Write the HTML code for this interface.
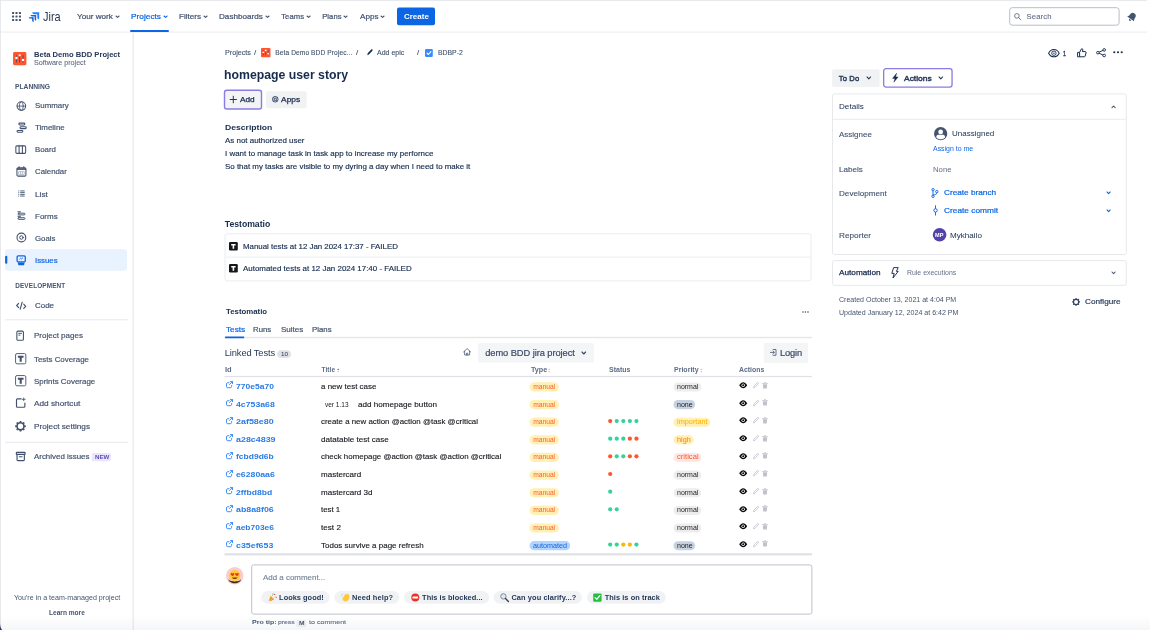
<!DOCTYPE html>
<html lang="en"><head><meta charset="utf-8"><title>homepage user story - Jira</title>
<style>
html,body{margin:0;padding:0;}
body{width:1150px;height:630px;position:relative;overflow:hidden;background:#fff;font-family:"Liberation Sans", sans-serif;color:#172B4D;}
#app{position:absolute;left:0;top:0;width:1150px;height:630px;will-change:transform;}
#app>div,#app>span,#app>svg{position:absolute;display:block;}
#app>span{white-space:pre;line-height:12px;transform-origin:0 50%;}
svg{overflow:visible;}
</style></head><body><div id="app">
<svg style="left:0px;top:0px;" width="1147" height="2"><rect x="0.00" y="0.00" width="1147.00" height="1.10" rx="0" fill="#E9EAED"/></svg>
<svg style="left:0px;top:31px;" width="1147" height="2"><rect x="0.00" y="0.50" width="1147.00" height="1.20" rx="0" fill="#EEEFF2"/></svg>
<svg style="left:132px;top:32px;" width="3" height="598"><rect x="0.30" y="0.50" width="1.80" height="597.50" rx="0" fill="#EEEFF2"/></svg>
<svg style="left:0px;top:0px;" width="1" height="630"><rect x="0.00" y="0.00" width="0.80" height="630.00" rx="0" fill="#E3E4E8"/></svg>
<svg style="left:12px;top:12px;" width="9" height="9" viewBox="0 0 9 9"><rect x="0" y="0" width="2.1" height="2.1" rx="0.5" fill="#44546F"/><rect x="0" y="3.45" width="2.1" height="2.1" rx="0.5" fill="#44546F"/><rect x="0" y="6.9" width="2.1" height="2.1" rx="0.5" fill="#44546F"/><rect x="3.45" y="0" width="2.1" height="2.1" rx="0.5" fill="#44546F"/><rect x="3.45" y="3.45" width="2.1" height="2.1" rx="0.5" fill="#44546F"/><rect x="3.45" y="6.9" width="2.1" height="2.1" rx="0.5" fill="#44546F"/><rect x="6.9" y="0" width="2.1" height="2.1" rx="0.5" fill="#44546F"/><rect x="6.9" y="3.45" width="2.1" height="2.1" rx="0.5" fill="#44546F"/><rect x="6.9" y="6.9" width="2.1" height="2.1" rx="0.5" fill="#44546F"/></svg>
<svg style="left:29px;top:12px;" width="10.5" height="10" viewBox="0 0 10.5 10"><path d="M3.2 0.3 H10.2 V7.3 C10.2 7.3 8.3 7.2 8.3 5.4 V2.2 H5.1 C3.3 2.2 3.2 0.3 3.2 0.3Z" fill="#2684FF"/>
<path d="M1.6 2.9 H7.2 V8.6 C7.2 8.6 5.6 8.5 5.6 6.9 V4.5 H3.2 C1.7 4.5 1.6 2.9 1.6 2.9Z" fill="#1868DB"/>
<path d="M0 5.2 H4.6 V9.9 C4.6 9.9 3.2 9.8 3.2 8.4 V6.6 H1.4 C0.1 6.6 0 5.2 0 5.2Z" fill="#0052CC"/></svg>
<span style="left:43.30px;top:11px;font-size:12.4px;transform:scaleX(0.885);color:#253858;">Jira</span>
<span style="left:77.40px;top:11px;font-size:7.6px;transform:scaleX(1.0695);color:#44546F;-webkit-text-stroke:0.22px #44546F;">Your work</span>
<svg style="left:115.45px;top:15.275px;" width="5.1" height="3.45" viewBox="0 0 5.1 3.45"><path d="M1 1 L2.55 2.45 L4.1 1" fill="none" stroke="#44546F" stroke-width="1.05" stroke-linecap="round" stroke-linejoin="round"/></svg>
<span style="left:131.20px;top:11px;font-size:7.6px;transform:scaleX(1.0944);color:#0C66E4;-webkit-text-stroke:0.22px #0C66E4;">Projects</span>
<svg style="left:163.45px;top:15.275px;" width="5.1" height="3.45" viewBox="0 0 5.1 3.45"><path d="M1 1 L2.55 2.45 L4.1 1" fill="none" stroke="#0C66E4" stroke-width="1.05" stroke-linecap="round" stroke-linejoin="round"/></svg>
<svg style="left:130px;top:29px;" width="39" height="3"><rect x="0.00" y="0.90" width="39.00" height="2.10" rx="1" fill="#0C66E4"/></svg>
<span style="left:178.80px;top:11px;font-size:7.6px;transform:scaleX(1.0656);color:#44546F;-webkit-text-stroke:0.22px #44546F;">Filters</span>
<svg style="left:203.45px;top:15.275px;" width="5.1" height="3.45" viewBox="0 0 5.1 3.45"><path d="M1 1 L2.55 2.45 L4.1 1" fill="none" stroke="#44546F" stroke-width="1.05" stroke-linecap="round" stroke-linejoin="round"/></svg>
<span style="left:219.40px;top:11px;font-size:7.6px;transform:scaleX(1.0702);color:#44546F;-webkit-text-stroke:0.22px #44546F;">Dashboards</span>
<svg style="left:265.05px;top:15.275px;" width="5.1" height="3.45" viewBox="0 0 5.1 3.45"><path d="M1 1 L2.55 2.45 L4.1 1" fill="none" stroke="#44546F" stroke-width="1.05" stroke-linecap="round" stroke-linejoin="round"/></svg>
<span style="left:281.20px;top:11px;font-size:7.6px;color:#44546F;letter-spacing:0.131px;-webkit-text-stroke:0.22px #44546F;">Teams</span>
<svg style="left:306.45px;top:15.275px;" width="5.1" height="3.45" viewBox="0 0 5.1 3.45"><path d="M1 1 L2.55 2.45 L4.1 1" fill="none" stroke="#44546F" stroke-width="1.05" stroke-linecap="round" stroke-linejoin="round"/></svg>
<span style="left:322.20px;top:11px;font-size:7.6px;color:#44546F;letter-spacing:0.086px;-webkit-text-stroke:0.22px #44546F;">Plans</span>
<svg style="left:343.45px;top:15.275px;" width="5.1" height="3.45" viewBox="0 0 5.1 3.45"><path d="M1 1 L2.55 2.45 L4.1 1" fill="none" stroke="#44546F" stroke-width="1.05" stroke-linecap="round" stroke-linejoin="round"/></svg>
<span style="left:359.80px;top:11px;font-size:7.6px;transform:scaleX(1.0644);color:#44546F;-webkit-text-stroke:0.22px #44546F;">Apps</span>
<svg style="left:380.45px;top:15.275px;" width="5.1" height="3.45" viewBox="0 0 5.1 3.45"><path d="M1 1 L2.55 2.45 L4.1 1" fill="none" stroke="#44546F" stroke-width="1.05" stroke-linecap="round" stroke-linejoin="round"/></svg>
<svg style="left:397px;top:7px;" width="38" height="19"><rect x="0.00" y="0.60" width="38.00" height="17.60" rx="2" fill="#0C66E4"/></svg>
<span style="left:403.90px;top:11px;font-size:7.6px;transform:scaleX(1.0502);font-weight:700;color:#fff;">Create</span>
<svg style="left:1009px;top:7px;" width="111" height="19"><rect x="0.70" y="0.70" width="109.40" height="17.50" rx="2.5" fill="#fff" stroke="#B7BDC8" stroke-width="1"/></svg>
<svg style="left:1014px;top:12.6px;" width="7" height="7" viewBox="0 0 7 7"><circle cx="2.9" cy="2.9" r="2.3" fill="none" stroke="#626F86" stroke-width="0.9"/><path d="M4.7 4.7 L6.6 6.6" stroke="#626F86" stroke-width="0.9" stroke-linecap="round"/></svg>
<span style="left:1026.50px;top:11px;font-size:7.7px;color:#626F86;letter-spacing:0.112px;-webkit-text-stroke:0.1px #626F86;">Search</span>
<svg style="left:1127px;top:11.5px;" width="10" height="10" viewBox="0 0 10 10"><g transform="rotate(35 5 5)"><path d="M5 0.6 C7.3 0.6 8 2.4 8 4.2 C8 6 8.9 6.8 9.2 7.4 H0.8 C1.1 6.8 2 6 2 4.2 C2 2.4 2.7 0.6 5 0.6Z" fill="#44546F"/><path d="M3.8 8.1 H6.2 C6.2 9 5.6 9.5 5 9.5 C4.4 9.5 3.8 9 3.8 8.1Z" fill="#44546F"/></g></svg>
<svg style="left:13px;top:51.7px;" width="13.5" height="13.3" viewBox="0 0 13.5 13.3"><rect x="0.05" y="0" width="13.35" height="13.2" rx="1.4" fill="#FF5630"/><g fill="#344563"><rect x="2.95" y="3.2" width="0.8" height="7.2"/><rect x="6.3" y="3.2" width="0.8" height="7.2"/><rect x="9.65" y="3.2" width="0.8" height="7.2"/></g><g fill="#fff"><circle cx="3.35" cy="6" r="1.2"/><circle cx="6.7" cy="3.3" r="1.15"/><circle cx="10.05" cy="8" r="1.2"/></g></svg>
<span style="left:33.80px;top:49px;font-size:7.3px;transform:scaleX(1.0411);font-weight:700;color:#253858;">Beta Demo BDD Project</span>
<span style="left:33.80px;top:57px;font-size:6.3px;transform:scaleX(1.136);color:#626F86;-webkit-text-stroke:0.1px #626F86;">Software project</span>
<span style="left:15.20px;top:81px;font-size:6.4px;transform:scaleX(1.0484);font-weight:700;color:#44546F;">PLANNING</span>
<svg style="left:16px;top:100.5px;" width="10.6" height="10.2" viewBox="0 0 10.6 10.2"><g fill="none" stroke="#42526E" stroke-linecap="round" stroke-linejoin="round"><circle cx="5.35" cy="5.1" r="4.3" stroke-width="1.05"/><ellipse cx="5.35" cy="5.1" rx="1.9" ry="4.3" stroke-width="0.8"/><path d="M1.1 5.1 H9.6" stroke-width="0.8"/></g></svg>
<span style="left:35.00px;top:100px;font-size:7.5px;transform:scaleX(1.0508);color:#42526E;-webkit-text-stroke:0.18px #42526E;">Summary</span>
<svg style="left:15.6px;top:122px;" width="11.2" height="11.4" viewBox="0 0 11.2 11.4"><g fill="none" stroke="#42526E" stroke-linecap="round" stroke-linejoin="round" stroke-width="1.1"><rect x="2.85" y="1.15" width="6" height="1.8" rx="0.9"/><rect x="4.05" y="4.8" width="6.2" height="1.8" rx="0.9"/><rect x="1.05" y="8.45" width="5.8" height="1.8" rx="0.9"/></g></svg>
<span style="left:35.00px;top:122px;font-size:7.5px;transform:scaleX(1.0587);color:#42526E;-webkit-text-stroke:0.18px #42526E;">Timeline</span>
<svg style="left:15.4px;top:144.8px;" width="11.6" height="9.4" viewBox="0 0 11.6 9.4"><g fill="none" stroke="#42526E" stroke-linecap="round" stroke-linejoin="round" stroke-width="1.05"><rect x="0.85" y="0.9" width="9.8" height="7.5" rx="1.1"/><path d="M4.1 0.9 V8.4 M7.4 0.9 V8.4"/></g></svg>
<span style="left:35.00px;top:144px;font-size:7.5px;transform:scaleX(1.0454);color:#42526E;-webkit-text-stroke:0.18px #42526E;">Board</span>
<svg style="left:15.6px;top:166.4px;" width="11" height="11" viewBox="0 0 11 11"><g fill="none" stroke="#42526E" stroke-linecap="round" stroke-linejoin="round"><rect x="0.95" y="1.7" width="9" height="8.4" rx="1.2" stroke-width="1.05"/><path d="M3.1 0.6 V2 M7.8 0.6 V2" stroke-width="1"/></g><rect x="0.9" y="2.2" width="9.1" height="1.7" fill="#42526E"/><g stroke="#42526E" stroke-width="0.45" opacity="0.75"><path d="M2.6 5.6 H8.3 M2.6 8.4 H8.3 M2.6 5.6 V8.4 M4.5 5.6 V8.4 M6.4 5.6 V8.4 M8.3 5.6 V8.4"/></g></svg>
<span style="left:34.90px;top:166px;font-size:7.5px;transform:scaleX(1.0456);color:#42526E;-webkit-text-stroke:0.18px #42526E;">Calendar</span>
<svg style="left:17.6px;top:190.4px;" width="7.2" height="6.8" viewBox="0 0 7.2 6.8"><g fill="#42526E"><rect x="0.3" y="0.5" width="0.9" height="0.9"/><rect x="0.3" y="2.2" width="0.9" height="0.9"/><rect x="0.3" y="3.9" width="0.9" height="0.9"/><rect x="0.3" y="5.6" width="0.9" height="0.9"/><rect x="2.2" y="0.5" width="4.5" height="0.9"/><rect x="2.2" y="2.2" width="4.5" height="0.9"/><rect x="2.2" y="3.9" width="4.5" height="0.9"/><rect x="2.2" y="5.6" width="4.5" height="0.9"/></g></svg>
<span style="left:34.90px;top:189px;font-size:7.5px;transform:scaleX(1.1074);color:#42526E;-webkit-text-stroke:0.18px #42526E;">List</span>
<svg style="left:16.8px;top:210.8px;" width="9.2" height="9.4" viewBox="0 0 9.2 9.4"><g fill="none" stroke="#42526E" stroke-linecap="round" stroke-linejoin="round" stroke-width="0.95"><rect x="1" y="2.2" width="7" height="1.7" rx="0.85"/><rect x="1" y="6.7" width="7" height="1.7" rx="0.85"/></g><g fill="#42526E"><rect x="0.5" y="0.3" width="3.4" height="1"/><rect x="0.5" y="4.8" width="3.4" height="1"/></g></svg>
<span style="left:34.90px;top:211px;font-size:7.5px;transform:scaleX(1.0647);color:#42526E;-webkit-text-stroke:0.18px #42526E;">Forms</span>
<svg style="left:15.6px;top:232.4px;" width="11" height="11" viewBox="0 0 11 11"><g fill="none" stroke="#42526E" stroke-linecap="round" stroke-linejoin="round"><circle cx="5.4" cy="5.5" r="4.4" stroke-width="1.1"/><circle cx="5.4" cy="5.5" r="1.75" stroke-width="1"/></g></svg>
<span style="left:34.90px;top:233px;font-size:7.5px;transform:scaleX(1.0373);color:#42526E;-webkit-text-stroke:0.18px #42526E;">Goals</span>
<svg style="left:5px;top:249px;" width="122" height="22"><rect x="0.10" y="0.20" width="121.90" height="21.60" rx="2" fill="#E9F2FF"/></svg>
<svg style="left:5px;top:255px;" width="3" height="9"><rect x="0.10" y="0.80" width="2.20" height="8.00" rx="1" fill="#0C66E4"/></svg>
<svg style="left:15.8px;top:254.9px;" width="10.4" height="10.5" viewBox="0 0 10.4 10.5"><rect x="1.1" y="0.9" width="8.2" height="6" rx="1.1" fill="none" stroke="#0C66E4" stroke-width="1.3"/><path d="M3.4 4.3 L4.6 3.3 L5.4 4 L7 2.6" fill="none" stroke="#0C66E4" stroke-width="0.9"/><path d="M1.7 7.6 H8.7 L8.1 9.9 C8 10.2 7.8 10.3 7.5 10.3 H2.9 C2.6 10.3 2.4 10.2 2.3 9.9Z" fill="#0C66E4"/></svg>
<span style="left:34.90px;top:255px;font-size:7.5px;transform:scaleX(1.0432);color:#0C66E4;-webkit-text-stroke:0.18px #0C66E4;">Issues</span>
<span style="left:15.20px;top:280px;font-size:6.4px;font-weight:700;color:#44546F;letter-spacing:0.14px;">DEVELOPMENT</span>
<svg style="left:15.8px;top:300.5px;" width="10.4" height="9" viewBox="0 0 26 23"><g fill="none" stroke="#42526E" stroke-width="2.9" stroke-linecap="round" stroke-linejoin="round"><path d="M6.5 6 L1.5 11.5 L6.5 17"/><path d="M19.5 8 L24.5 13.5 L19.5 19"/><path d="M15.5 3 L10.5 21"/></g></svg>
<span style="left:34.90px;top:300px;font-size:7.5px;transform:scaleX(1.0606);color:#42526E;-webkit-text-stroke:0.18px #42526E;">Code</span>
<svg style="left:5px;top:319px;" width="124" height="2"><rect x="0.00" y="0.20" width="123.30" height="1.10" rx="0" fill="#EBECF0"/></svg>
<svg style="left:16.3px;top:330px;" width="8.3" height="11.4" viewBox="0 0 19 25"><g fill="none" stroke="#42526E" stroke-width="2.5" stroke-linecap="round" stroke-linejoin="round"><rect x="2" y="2" width="15" height="21" rx="2.5"/></g><g fill="#42526E"><rect x="5.5" y="6" width="8" height="2.2"/><rect x="5.5" y="10" width="4.5" height="2.2"/></g></svg>
<span style="left:34.30px;top:330px;font-size:7.5px;transform:scaleX(1.0665);color:#42526E;-webkit-text-stroke:0.18px #42526E;">Project pages</span>
<svg style="left:14.9px;top:353.4px;" width="11.4" height="11.4" viewBox="0 0 24 24"><rect x="1.2" y="1.2" width="21.6" height="21.6" rx="3" fill="none" stroke="#42526E" stroke-width="1.9"/><path d="M6 6 H18 V10 H14.2 V18.5 H9.8 V10 H6Z" fill="#42526E"/></svg>
<span style="left:34.30px;top:354px;font-size:7.5px;transform:scaleX(1.054);color:#42526E;-webkit-text-stroke:0.18px #42526E;">Tests Coverage</span>
<svg style="left:14.9px;top:375.2px;" width="11.4" height="11.4" viewBox="0 0 24 24"><rect x="1.2" y="1.2" width="21.6" height="21.6" rx="3" fill="none" stroke="#42526E" stroke-width="1.9"/><path d="M6 6 H18 V10 H14.2 V18.5 H9.8 V10 H6Z" fill="#42526E"/></svg>
<span style="left:34.30px;top:376px;font-size:7.5px;transform:scaleX(1.0565);color:#42526E;-webkit-text-stroke:0.18px #42526E;">Sprints Coverage</span>
<svg style="left:14.9px;top:397.4px;" width="11.4" height="11.2" viewBox="0 0 24 24"><g fill="none" stroke="#42526E" stroke-width="2.5" stroke-linecap="round" stroke-linejoin="round"><path d="M13 4 H5 C3.9 4 3 4.9 3 6 V20 C3 21.1 3.9 22 5 22 H19 C20.1 22 21 21.1 21 20 V13"/><path d="M18.5 2 V8 M15.5 5 H21.5" stroke-width="1.8"/></g></svg>
<span style="left:34.30px;top:398px;font-size:7.5px;transform:scaleX(1.1001);color:#42526E;-webkit-text-stroke:0.18px #42526E;">Add shortcut</span>
<svg style="left:14.9px;top:420.8px;" width="11" height="11" viewBox="1.5 0.5 21 21"><g transform="translate(12 10.5)"><circle r="6.6" fill="none" stroke="#42526E" stroke-width="3"/><rect x="-1.7" y="-10.2" width="3.4" height="3.4" rx="0.8" fill="#42526E" transform="rotate(0)"/><rect x="-1.7" y="-10.2" width="3.4" height="3.4" rx="0.8" fill="#42526E" transform="rotate(45)"/><rect x="-1.7" y="-10.2" width="3.4" height="3.4" rx="0.8" fill="#42526E" transform="rotate(90)"/><rect x="-1.7" y="-10.2" width="3.4" height="3.4" rx="0.8" fill="#42526E" transform="rotate(135)"/><rect x="-1.7" y="-10.2" width="3.4" height="3.4" rx="0.8" fill="#42526E" transform="rotate(180)"/><rect x="-1.7" y="-10.2" width="3.4" height="3.4" rx="0.8" fill="#42526E" transform="rotate(225)"/><rect x="-1.7" y="-10.2" width="3.4" height="3.4" rx="0.8" fill="#42526E" transform="rotate(270)"/><rect x="-1.7" y="-10.2" width="3.4" height="3.4" rx="0.8" fill="#42526E" transform="rotate(315)"/></g></svg>
<span style="left:34.30px;top:421px;font-size:7.5px;transform:scaleX(1.0925);color:#42526E;-webkit-text-stroke:0.18px #42526E;">Project settings</span>
<svg style="left:5px;top:441px;" width="124" height="2"><rect x="0.00" y="0.80" width="123.30" height="1.10" rx="0" fill="#EBECF0"/></svg>
<svg style="left:14.9px;top:451px;" width="11.4" height="11" viewBox="0 0 24 24"><g fill="none" stroke="#42526E" stroke-width="2.5" stroke-linecap="round" stroke-linejoin="round"><rect x="2.5" y="3" width="19" height="4.5" rx="1"/><path d="M4 7.5 V19 C4 20.1 4.9 21 6 21 H18 C19.1 21 20 20.1 20 19 V7.5"/><path d="M9 12.5 H15"/></g></svg>
<span style="left:34.30px;top:451px;font-size:7.5px;transform:scaleX(1.0551);color:#42526E;-webkit-text-stroke:0.18px #42526E;">Archived issues</span>
<svg style="left:91px;top:453px;" width="20" height="9"><rect x="0.70" y="0.00" width="19.10" height="8.30" rx="1.5" fill="#EAE6FF"/></svg>
<span style="left:94.60px;top:451px;font-size:5.6px;transform:scaleX(1.0923);font-weight:700;color:#5E4DB2;">NEW</span>
<span style="left:13.90px;top:592px;font-size:6.3px;transform:scaleX(1.1285);color:#44546F;">You&#x27;re in a team-managed project</span>
<span style="left:48.90px;top:607px;font-size:6.9px;transform:scaleX(0.9541);font-weight:700;color:#44546F;">Learn more</span>
<span style="left:224.80px;top:47px;font-size:6.6px;transform:scaleX(1.0869);color:#44546F;-webkit-text-stroke:0.12px #44546F;">Projects</span>
<span style="left:254.20px;top:47px;font-size:6.6px;transform:scaleX(1.1921);color:#44546F;-webkit-text-stroke:0.12px #44546F;">/</span>
<svg style="left:260.9px;top:47.9px;" width="9.6" height="9.3" viewBox="0 0 9.6 9.3"><rect width="9.5" height="9.3" rx="1" fill="#FF5630"/><g fill="#344563"><rect x="2.1" y="2.3" width="0.6" height="5"/><rect x="4.45" y="2.3" width="0.6" height="5"/><rect x="6.8" y="2.3" width="0.6" height="5"/></g><g fill="#fff"><circle cx="2.4" cy="4.3" r="0.85"/><circle cx="4.75" cy="2.4" r="0.85"/><circle cx="7.1" cy="5.7" r="0.85"/></g></svg>
<span style="left:275.20px;top:47px;font-size:6.6px;color:#44546F;letter-spacing:0.11px;-webkit-text-stroke:0.12px #44546F;">Beta Demo BDD Projec...</span>
<span style="left:355.90px;top:47px;font-size:6.6px;transform:scaleX(1.1921);color:#44546F;-webkit-text-stroke:0.12px #44546F;">/</span>
<svg style="left:367px;top:49.2px;" width="5.8" height="6.4" viewBox="0 0 5.8 6.4"><path d="M0.3 6.2 L0.7 4.3 L4.2 0.6 C4.6 0.2 5.1 0.2 5.4 0.6 C5.8 1 5.8 1.4 5.4 1.8 L1.9 5.6 Z" fill="#172B4D"/></svg>
<span style="left:377.20px;top:47px;font-size:6.6px;transform:scaleX(1.0633);color:#44546F;-webkit-text-stroke:0.12px #44546F;">Add epic</span>
<span style="left:417.20px;top:47px;font-size:6.6px;transform:scaleX(1.1921);color:#44546F;-webkit-text-stroke:0.12px #44546F;">/</span>
<svg style="left:424.8px;top:48.6px;" width="7.8" height="8" viewBox="0 0 7.8 8"><rect width="7.8" height="8" rx="1.2" fill="#388BFF"/><path d="M2 4.1 L3.4 5.5 L5.9 2.6" fill="none" stroke="#fff" stroke-width="1.1" stroke-linecap="round" stroke-linejoin="round"/></svg>
<span style="left:438.00px;top:47px;font-size:6.6px;transform:scaleX(1.0407);color:#44546F;-webkit-text-stroke:0.12px #44546F;">BDBP-2</span>
<span style="left:224.20px;top:69px;font-size:13.2px;transform:scaleX(0.9303);font-weight:700;">homepage user story</span>
<svg style="left:223px;top:89px;" width="40" height="21"><rect x="1.50" y="1.20" width="37.00" height="18.80" rx="2.3" fill="#F3F4F6" stroke="#8B7BE3" stroke-width="1.4"/></svg>
<svg style="left:230.3px;top:95.9px;" width="6.6" height="7" viewBox="0 0 6.6 7"><path d="M3.3 0.2 V6.8 M0.1 3.5 H6.5" stroke="#172B4D" stroke-width="0.95" stroke-linecap="round"/></svg>
<span style="left:239.90px;top:94px;font-size:7.6px;transform:scaleX(1.0897);-webkit-text-stroke:0.25px #172B4D;">Add</span>
<svg style="left:266px;top:91px;" width="41" height="18"><rect x="0.00" y="0.30" width="40.60" height="17.00" rx="2" fill="#F1F2F4"/></svg>
<svg style="left:271.5px;top:96px;" width="6.5" height="6.5" viewBox="0 0 6.5 6.5"><g fill="none" stroke="#172B4D" stroke-width="0.8"><circle cx="3.25" cy="3.25" r="2.8"/><circle cx="3.25" cy="3.25" r="1.2"/><path d="M1.3 1.3 L2.4 2.4 M5.2 1.3 L4.1 2.4 M1.3 5.2 L2.4 4.1 M5.2 5.2 L4.1 4.1" stroke-width="0.6"/></g></svg>
<span style="left:280.70px;top:94px;font-size:7.6px;transform:scaleX(1.1106);-webkit-text-stroke:0.25px #172B4D;">Apps</span>
<span style="left:224.80px;top:122px;font-size:8.1px;transform:scaleX(1.0631);font-weight:700;">Description</span>
<span style="left:224.80px;top:135px;font-size:7.3px;transform:scaleX(1.0891);-webkit-text-stroke:0.15px #172B4D;">As not authorized user</span>
<span style="left:224.80px;top:148px;font-size:7.3px;transform:scaleX(1.0909);-webkit-text-stroke:0.15px #172B4D;">I want to manage task in task app to increase my perfornce</span>
<span style="left:224.80px;top:161px;font-size:7.3px;transform:scaleX(1.0859);-webkit-text-stroke:0.15px #172B4D;">So that my tasks are visible to my dyring a day when I need to make it</span>
<span style="left:224.80px;top:218px;font-size:8.7px;font-weight:700;letter-spacing:-0.034px;">Testomatio</span>
<svg style="left:224px;top:233px;" width="588" height="49"><rect x="1.00" y="0.80" width="586.00" height="47.10" rx="2" fill="#fff" stroke="#EBECEF" stroke-width="1"/></svg>
<svg style="left:225px;top:256px;" width="586" height="2"><rect x="0.50" y="0.60" width="585.00" height="1.00" rx="0" fill="#ECEDF0"/></svg>
<svg style="left:229.2px;top:241.7px;" width="8.8" height="8.6" viewBox="0 0 8.8 8.6"><rect width="8.8" height="8.6" rx="1.3" fill="#15171A"/><path d="M2.2 2 H6.6 V3.5 H5.2 V6.8 H3.6 V3.5 H2.2Z" fill="#fff"/></svg>
<span style="left:242.90px;top:241px;font-size:7.3px;transform:scaleX(1.0782);-webkit-text-stroke:0.15px #172B4D;">Manual tests at 12 Jan 2024 17:37 - FAILED</span>
<svg style="left:229.2px;top:264.2px;" width="8.8" height="8.6" viewBox="0 0 8.8 8.6"><rect width="8.8" height="8.6" rx="1.3" fill="#15171A"/><path d="M2.2 2 H6.6 V3.5 H5.2 V6.8 H3.6 V3.5 H2.2Z" fill="#fff"/></svg>
<span style="left:242.90px;top:263px;font-size:7.3px;transform:scaleX(1.0882);-webkit-text-stroke:0.15px #172B4D;">Automated tests at 12 Jan 2024 17:40 - FAILED</span>
<span style="left:225.50px;top:306px;font-size:7.5px;transform:scaleX(1.0424);font-weight:700;">Testomatio</span>
<svg style="left:802px;top:310.8px;" width="7" height="2" viewBox="0 0 7 2"><g fill="#44546F"><circle cx="1" cy="1" r="0.8"/><circle cx="3.5" cy="1" r="0.8"/><circle cx="6" cy="1" r="0.8"/></g></svg>
<span style="left:225.50px;top:324px;font-size:7.3px;transform:scaleX(1.1285);color:#0C66E4;-webkit-text-stroke:0.2px #0C66E4;">Tests</span>
<span style="left:253.30px;top:324px;font-size:7.3px;transform:scaleX(1.0688);color:#44546F;-webkit-text-stroke:0.2px #44546F;">Runs</span>
<span style="left:280.90px;top:324px;font-size:7.3px;transform:scaleX(1.1005);color:#44546F;-webkit-text-stroke:0.2px #44546F;">Suites</span>
<span style="left:312.10px;top:324px;font-size:7.3px;transform:scaleX(1.0741);color:#44546F;-webkit-text-stroke:0.2px #44546F;">Plans</span>
<svg style="left:224px;top:336px;" width="588" height="3"><rect x="0.50" y="0.80" width="587.50" height="1.40" rx="0" fill="#E4E6EA"/></svg>
<svg style="left:225px;top:336px;" width="20" height="3"><rect x="0.00" y="0.40" width="19.20" height="1.90" rx="0.5" fill="#0C66E4"/></svg>
<span style="left:224.80px;top:347px;font-size:9.3px;color:#253858;letter-spacing:-0.111px;">Linked Tests</span>
<svg style="left:277px;top:350px;" width="14" height="8"><rect x="0.20" y="0.20" width="13.80" height="7.80" rx="4" fill="#DFE1E6"/></svg>
<span style="left:280.90px;top:348px;font-size:6px;transform:scaleX(1.0587);color:#253858;">10</span>
<svg style="left:463.2px;top:347.9px;" width="8.2" height="7.6" viewBox="0 0 8.2 7.6"><path d="M0.5 4 L4.1 0.6 L7.7 4 M1.6 3.3 V7 H6.6 V3.3 M3.4 7 V5.2 H4.8 V7" fill="none" stroke="#44546F" stroke-width="0.75" stroke-linejoin="round" stroke-linecap="round"/></svg>
<svg style="left:477px;top:342px;" width="117" height="21"><rect x="0.90" y="0.90" width="116.00" height="19.70" rx="2" fill="#F4F5F7"/></svg>
<span style="left:485.20px;top:347px;font-size:9.3px;color:#3B4A66;letter-spacing:-0.065px;-webkit-text-stroke:0.2px #3B4A66;">demo BDD jira project</span>
<svg style="left:580.7px;top:351.2px;" width="5.6" height="4" viewBox="0 0 5.6 4"><path d="M1 1 L2.8 3 L4.6 1" fill="none" stroke="#3B4A66" stroke-width="1.15" stroke-linecap="round" stroke-linejoin="round"/></svg>
<svg style="left:763px;top:342px;" width="46" height="21"><rect x="0.80" y="0.80" width="44.30" height="20.10" rx="2" fill="#F4F5F7"/></svg>
<svg style="left:769.7px;top:348.8px;" width="6.5" height="6.8" viewBox="0 0 6.5 6.8"><g fill="none" stroke="#42526E" stroke-width="0.8" stroke-linecap="round" stroke-linejoin="round"><path d="M3.2 0.5 H6 V6.3 H3.2"/><path d="M0.4 3.4 H4.2 M2.9 2 L4.3 3.4 L2.9 4.8"/></g></svg>
<span style="left:779.90px;top:347px;font-size:9.3px;color:#3B4A66;letter-spacing:-0.094px;-webkit-text-stroke:0.2px #3B4A66;">Login</span>
<span style="left:224.80px;top:364px;font-size:6.5px;transform:scaleX(1.1581);font-weight:700;color:#5E6C84;">Id</span>
<span style="left:321.60px;top:364px;font-size:6.5px;font-weight:700;color:#5E6C84;letter-spacing:0.049px;">Title</span>
<span style="left:530.50px;top:364px;font-size:6.5px;transform:scaleX(1.1015);font-weight:700;color:#5E6C84;">Type</span>
<span style="left:608.90px;top:364px;font-size:6.5px;transform:scaleX(1.0765);font-weight:700;color:#5E6C84;">Status</span>
<span style="left:673.80px;top:364px;font-size:6.5px;transform:scaleX(1.0804);font-weight:700;color:#5E6C84;">Priority</span>
<span style="left:739.20px;top:364px;font-size:6.5px;transform:scaleX(1.0609);font-weight:700;color:#5E6C84;">Actions</span>
<svg style="left:336.8px;top:368px;" width="2.4" height="4.8" viewBox="0 0 2.4 4.8"><path d="M0.1 1.9 L1.2 0.4 L2.3 1.9Z" fill="#5E6C84"/><path d="M0.1 2.9 L1.2 4.4 L2.3 2.9Z" fill="#C1C7D0"/></svg>
<svg style="left:548.2px;top:368px;" width="2.4" height="4.8" viewBox="0 0 2.4 4.8"><path d="M0.1 1.9 L1.2 0.4 L2.3 1.9Z" fill="#C1C7D0"/><path d="M0.1 2.9 L1.2 4.4 L2.3 2.9Z" fill="#C1C7D0"/></svg>
<svg style="left:700.2px;top:368px;" width="2.4" height="4.8" viewBox="0 0 2.4 4.8"><path d="M0.1 1.9 L1.2 0.4 L2.3 1.9Z" fill="#C1C7D0"/><path d="M0.1 2.9 L1.2 4.4 L2.3 2.9Z" fill="#C1C7D0"/></svg>
<svg style="left:224px;top:375px;" width="588" height="3"><rect x="0.50" y="0.90" width="587.50" height="1.20" rx="0" fill="#DFE1E6"/></svg>
<svg style="left:225.7px;top:381.3px;" width="7" height="7.2" viewBox="0 0 7 7.2"><g fill="none" stroke="#1D7AFC" stroke-width="0.85" stroke-linecap="round" stroke-linejoin="round"><path d="M3 1.7 H1.7 C1 1.7 0.5 2.2 0.5 2.9 V5.5 C0.5 6.2 1 6.7 1.7 6.7 H4.4 C5.1 6.7 5.6 6.2 5.6 5.5 V4.5"/><path d="M4.4 0.6 H6.5 V2.7 M6.4 0.7 L3.5 3.6"/></g></svg>
<span style="left:236.10px;top:381px;font-size:7.8px;transform:scaleX(1.0931);font-weight:700;color:#2A7BE4;">770e5a70</span>
<span style="left:321.10px;top:381px;font-size:7.3px;transform:scaleX(1.093);color:#15181D;-webkit-text-stroke:0.12px #15181D;">a new test case</span>
<svg style="left:529px;top:382px;" width="30" height="10"><rect x="0.50" y="0.30" width="29.40" height="9.20" rx="4.6" fill="#FFF0B3"/></svg>
<span style="left:533.20px;top:381px;font-size:6.7px;color:#FF5B36;letter-spacing:-0.006px;">manual</span>
<svg style="left:673px;top:382px;" width="29" height="10"><rect x="0.50" y="0.40" width="27.80" height="9.10" rx="4.5" fill="#EDEDEE"/></svg>
<span style="left:676.90px;top:381px;font-size:6.7px;transform:scaleX(1.0463);color:#1B1B1B;">normal</span>
<svg style="left:739.2px;top:382.1px;" width="8.4" height="6.4" viewBox="0 0 8.4 6.4"><path d="M0.2 3.2 C1.4 1.1 2.8 0.2 4.2 0.2 C5.6 0.2 7 1.1 8.2 3.2 C7 5.3 5.6 6.2 4.2 6.2 C2.8 6.2 1.4 5.3 0.2 3.2Z" fill="#0B0B0B"/><circle cx="4.2" cy="3.2" r="1.7" fill="#fff"/><circle cx="4.2" cy="3.2" r="1" fill="#0B0B0B"/></svg>
<svg style="left:753.3px;top:382.1px;" width="6" height="6.2" viewBox="0 0 6 6.2"><path d="M0.5 5.8 L0.9 4.2 L4.3 0.7 C4.6 0.4 5.1 0.4 5.4 0.7 C5.7 1 5.7 1.4 5.4 1.7 L2 5.3 Z" fill="none" stroke="#B4B8BF" stroke-width="0.7" stroke-linejoin="round"/></svg>
<svg style="left:762.4px;top:381.7px;" width="6" height="6.8" viewBox="0 0 6 6.8"><path d="M0.2 1 H5.8 V1.8 H0.2Z M2.1 0.2 H3.9 V1 H2.1Z M0.8 2.2 H5.2 L4.8 6.6 H1.2Z" fill="#BFC2C8"/></svg>
<svg style="left:225.7px;top:398.94px;" width="7" height="7.2" viewBox="0 0 7 7.2"><g fill="none" stroke="#1D7AFC" stroke-width="0.85" stroke-linecap="round" stroke-linejoin="round"><path d="M3 1.7 H1.7 C1 1.7 0.5 2.2 0.5 2.9 V5.5 C0.5 6.2 1 6.7 1.7 6.7 H4.4 C5.1 6.7 5.6 6.2 5.6 5.5 V4.5"/><path d="M4.4 0.6 H6.5 V2.7 M6.4 0.7 L3.5 3.6"/></g></svg>
<span style="left:236.10px;top:399px;font-size:7.8px;transform:scaleX(1.119);font-weight:700;color:#2A7BE4;">4c753a68</span>
<span style="left:325.40px;top:399px;font-size:7.0px;transform:scaleX(0.9294);color:#15181D;">ver 1.13</span>
<span style="left:357.70px;top:399px;font-size:7.3px;transform:scaleX(1.1113);color:#15181D;-webkit-text-stroke:0.12px #15181D;">add homepage button</span>
<svg style="left:529px;top:399px;" width="30" height="11"><rect x="0.50" y="0.94" width="29.40" height="9.20" rx="4.6" fill="#FFF0B3"/></svg>
<span style="left:533.20px;top:399px;font-size:6.7px;color:#FF5B36;letter-spacing:-0.006px;">manual</span>
<svg style="left:673px;top:400px;" width="23" height="10"><rect x="0.50" y="0.04" width="21.60" height="9.10" rx="4.5" fill="#C7D2E1"/></svg>
<span style="left:676.90px;top:399px;font-size:6.7px;transform:scaleX(1.0544);color:#1B1B1B;">none</span>
<svg style="left:739.2px;top:399.74px;" width="8.4" height="6.4" viewBox="0 0 8.4 6.4"><path d="M0.2 3.2 C1.4 1.1 2.8 0.2 4.2 0.2 C5.6 0.2 7 1.1 8.2 3.2 C7 5.3 5.6 6.2 4.2 6.2 C2.8 6.2 1.4 5.3 0.2 3.2Z" fill="#0B0B0B"/><circle cx="4.2" cy="3.2" r="1.7" fill="#fff"/><circle cx="4.2" cy="3.2" r="1" fill="#0B0B0B"/></svg>
<svg style="left:753.3px;top:399.74px;" width="6" height="6.2" viewBox="0 0 6 6.2"><path d="M0.5 5.8 L0.9 4.2 L4.3 0.7 C4.6 0.4 5.1 0.4 5.4 0.7 C5.7 1 5.7 1.4 5.4 1.7 L2 5.3 Z" fill="none" stroke="#B4B8BF" stroke-width="0.7" stroke-linejoin="round"/></svg>
<svg style="left:762.4px;top:399.34px;" width="6" height="6.8" viewBox="0 0 6 6.8"><path d="M0.2 1 H5.8 V1.8 H0.2Z M2.1 0.2 H3.9 V1 H2.1Z M0.8 2.2 H5.2 L4.8 6.6 H1.2Z" fill="#BFC2C8"/></svg>
<svg style="left:225.7px;top:416.58px;" width="7" height="7.2" viewBox="0 0 7 7.2"><g fill="none" stroke="#1D7AFC" stroke-width="0.85" stroke-linecap="round" stroke-linejoin="round"><path d="M3 1.7 H1.7 C1 1.7 0.5 2.2 0.5 2.9 V5.5 C0.5 6.2 1 6.7 1.7 6.7 H4.4 C5.1 6.7 5.6 6.2 5.6 5.5 V4.5"/><path d="M4.4 0.6 H6.5 V2.7 M6.4 0.7 L3.5 3.6"/></g></svg>
<span style="left:236.10px;top:416px;font-size:7.8px;transform:scaleX(1.1451);font-weight:700;color:#2A7BE4;">2af58e80</span>
<span style="left:321.10px;top:416px;font-size:7.3px;transform:scaleX(1.082);color:#15181D;-webkit-text-stroke:0.12px #15181D;">create a new action @action @task @critical</span>
<svg style="left:529px;top:417px;" width="30" height="10"><rect x="0.50" y="0.58" width="29.40" height="9.20" rx="4.6" fill="#FFF0B3"/></svg>
<span style="left:533.20px;top:416px;font-size:6.7px;color:#FF5B36;letter-spacing:-0.006px;">manual</span>
<svg style="left:608px;top:418px;" width="5" height="6"><rect x="0.10" y="0.98" width="4.20" height="4.20" rx="2.1" fill="#FF5630"/></svg>
<svg style="left:614px;top:418px;" width="5" height="6"><rect x="0.66" y="0.98" width="4.20" height="4.20" rx="2.1" fill="#36D399"/></svg>
<svg style="left:621px;top:418px;" width="5" height="6"><rect x="0.22" y="0.98" width="4.20" height="4.20" rx="2.1" fill="#36D399"/></svg>
<svg style="left:627px;top:418px;" width="5" height="6"><rect x="0.78" y="0.98" width="4.20" height="4.20" rx="2.1" fill="#36D399"/></svg>
<svg style="left:634px;top:418px;" width="5" height="6"><rect x="0.34" y="0.98" width="4.20" height="4.20" rx="2.1" fill="#36D399"/></svg>
<svg style="left:673px;top:417px;" width="38" height="10"><rect x="0.50" y="0.68" width="36.80" height="9.10" rx="4.5" fill="#FFF0B3"/></svg>
<span style="left:676.90px;top:416px;font-size:6.7px;transform:scaleX(1.0972);color:#FFAB00;">important</span>
<svg style="left:739.2px;top:417.38px;" width="8.4" height="6.4" viewBox="0 0 8.4 6.4"><path d="M0.2 3.2 C1.4 1.1 2.8 0.2 4.2 0.2 C5.6 0.2 7 1.1 8.2 3.2 C7 5.3 5.6 6.2 4.2 6.2 C2.8 6.2 1.4 5.3 0.2 3.2Z" fill="#0B0B0B"/><circle cx="4.2" cy="3.2" r="1.7" fill="#fff"/><circle cx="4.2" cy="3.2" r="1" fill="#0B0B0B"/></svg>
<svg style="left:753.3px;top:417.38px;" width="6" height="6.2" viewBox="0 0 6 6.2"><path d="M0.5 5.8 L0.9 4.2 L4.3 0.7 C4.6 0.4 5.1 0.4 5.4 0.7 C5.7 1 5.7 1.4 5.4 1.7 L2 5.3 Z" fill="none" stroke="#B4B8BF" stroke-width="0.7" stroke-linejoin="round"/></svg>
<svg style="left:762.4px;top:416.98px;" width="6" height="6.8" viewBox="0 0 6 6.8"><path d="M0.2 1 H5.8 V1.8 H0.2Z M2.1 0.2 H3.9 V1 H2.1Z M0.8 2.2 H5.2 L4.8 6.6 H1.2Z" fill="#BFC2C8"/></svg>
<svg style="left:225.7px;top:434.22px;" width="7" height="7.2" viewBox="0 0 7 7.2"><g fill="none" stroke="#1D7AFC" stroke-width="0.85" stroke-linecap="round" stroke-linejoin="round"><path d="M3 1.7 H1.7 C1 1.7 0.5 2.2 0.5 2.9 V5.5 C0.5 6.2 1 6.7 1.7 6.7 H4.4 C5.1 6.7 5.6 6.2 5.6 5.5 V4.5"/><path d="M4.4 0.6 H6.5 V2.7 M6.4 0.7 L3.5 3.6"/></g></svg>
<span style="left:236.10px;top:434px;font-size:7.8px;transform:scaleX(1.1392);font-weight:700;color:#2A7BE4;">a28c4839</span>
<span style="left:321.10px;top:434px;font-size:7.3px;transform:scaleX(1.107);color:#15181D;-webkit-text-stroke:0.12px #15181D;">datatable test case</span>
<svg style="left:529px;top:435px;" width="30" height="10"><rect x="0.50" y="0.22" width="29.40" height="9.20" rx="4.6" fill="#FFF0B3"/></svg>
<span style="left:533.20px;top:434px;font-size:6.7px;color:#FF5B36;letter-spacing:-0.006px;">manual</span>
<svg style="left:608px;top:436px;" width="5" height="5"><rect x="0.10" y="0.62" width="4.20" height="4.20" rx="2.1" fill="#36D399"/></svg>
<svg style="left:614px;top:436px;" width="5" height="5"><rect x="0.66" y="0.62" width="4.20" height="4.20" rx="2.1" fill="#36D399"/></svg>
<svg style="left:621px;top:436px;" width="5" height="5"><rect x="0.22" y="0.62" width="4.20" height="4.20" rx="2.1" fill="#36D399"/></svg>
<svg style="left:627px;top:436px;" width="5" height="5"><rect x="0.78" y="0.62" width="4.20" height="4.20" rx="2.1" fill="#FF5630"/></svg>
<svg style="left:634px;top:436px;" width="5" height="5"><rect x="0.34" y="0.62" width="4.20" height="4.20" rx="2.1" fill="#FF5630"/></svg>
<svg style="left:673px;top:435px;" width="21" height="10"><rect x="0.50" y="0.32" width="20.10" height="9.10" rx="4.5" fill="#FFF0B3"/></svg>
<span style="left:676.90px;top:434px;font-size:6.7px;transform:scaleX(1.0904);color:#FF7A1A;">high</span>
<svg style="left:739.2px;top:435.02px;" width="8.4" height="6.4" viewBox="0 0 8.4 6.4"><path d="M0.2 3.2 C1.4 1.1 2.8 0.2 4.2 0.2 C5.6 0.2 7 1.1 8.2 3.2 C7 5.3 5.6 6.2 4.2 6.2 C2.8 6.2 1.4 5.3 0.2 3.2Z" fill="#0B0B0B"/><circle cx="4.2" cy="3.2" r="1.7" fill="#fff"/><circle cx="4.2" cy="3.2" r="1" fill="#0B0B0B"/></svg>
<svg style="left:753.3px;top:435.02px;" width="6" height="6.2" viewBox="0 0 6 6.2"><path d="M0.5 5.8 L0.9 4.2 L4.3 0.7 C4.6 0.4 5.1 0.4 5.4 0.7 C5.7 1 5.7 1.4 5.4 1.7 L2 5.3 Z" fill="none" stroke="#B4B8BF" stroke-width="0.7" stroke-linejoin="round"/></svg>
<svg style="left:762.4px;top:434.62px;" width="6" height="6.8" viewBox="0 0 6 6.8"><path d="M0.2 1 H5.8 V1.8 H0.2Z M2.1 0.2 H3.9 V1 H2.1Z M0.8 2.2 H5.2 L4.8 6.6 H1.2Z" fill="#BFC2C8"/></svg>
<svg style="left:225.7px;top:451.86px;" width="7" height="7.2" viewBox="0 0 7 7.2"><g fill="none" stroke="#1D7AFC" stroke-width="0.85" stroke-linecap="round" stroke-linejoin="round"><path d="M3 1.7 H1.7 C1 1.7 0.5 2.2 0.5 2.9 V5.5 C0.5 6.2 1 6.7 1.7 6.7 H4.4 C5.1 6.7 5.6 6.2 5.6 5.5 V4.5"/><path d="M4.4 0.6 H6.5 V2.7 M6.4 0.7 L3.5 3.6"/></g></svg>
<span style="left:236.10px;top:451px;font-size:7.8px;transform:scaleX(1.0888);font-weight:700;color:#2A7BE4;">fcbd9d6b</span>
<span style="left:321.10px;top:451px;font-size:7.3px;transform:scaleX(1.0835);color:#15181D;-webkit-text-stroke:0.12px #15181D;">check homepage @action @task @action @critical</span>
<svg style="left:529px;top:452px;" width="30" height="11"><rect x="0.50" y="0.86" width="29.40" height="9.20" rx="4.6" fill="#FFF0B3"/></svg>
<span style="left:533.20px;top:451px;font-size:6.7px;color:#FF5B36;letter-spacing:-0.006px;">manual</span>
<svg style="left:608px;top:454px;" width="5" height="5"><rect x="0.10" y="0.26" width="4.20" height="4.20" rx="2.1" fill="#FF5630"/></svg>
<svg style="left:614px;top:454px;" width="5" height="5"><rect x="0.66" y="0.26" width="4.20" height="4.20" rx="2.1" fill="#36D399"/></svg>
<svg style="left:621px;top:454px;" width="5" height="5"><rect x="0.22" y="0.26" width="4.20" height="4.20" rx="2.1" fill="#36D399"/></svg>
<svg style="left:627px;top:454px;" width="5" height="5"><rect x="0.78" y="0.26" width="4.20" height="4.20" rx="2.1" fill="#FF5630"/></svg>
<svg style="left:634px;top:454px;" width="5" height="5"><rect x="0.34" y="0.26" width="4.20" height="4.20" rx="2.1" fill="#FF5630"/></svg>
<svg style="left:673px;top:452px;" width="29" height="11"><rect x="0.50" y="0.96" width="27.80" height="9.10" rx="4.5" fill="#FFE8E3"/></svg>
<span style="left:676.90px;top:451px;font-size:6.7px;transform:scaleX(1.1397);color:#FF5630;">critical</span>
<svg style="left:739.2px;top:452.66px;" width="8.4" height="6.4" viewBox="0 0 8.4 6.4"><path d="M0.2 3.2 C1.4 1.1 2.8 0.2 4.2 0.2 C5.6 0.2 7 1.1 8.2 3.2 C7 5.3 5.6 6.2 4.2 6.2 C2.8 6.2 1.4 5.3 0.2 3.2Z" fill="#0B0B0B"/><circle cx="4.2" cy="3.2" r="1.7" fill="#fff"/><circle cx="4.2" cy="3.2" r="1" fill="#0B0B0B"/></svg>
<svg style="left:753.3px;top:452.66px;" width="6" height="6.2" viewBox="0 0 6 6.2"><path d="M0.5 5.8 L0.9 4.2 L4.3 0.7 C4.6 0.4 5.1 0.4 5.4 0.7 C5.7 1 5.7 1.4 5.4 1.7 L2 5.3 Z" fill="none" stroke="#B4B8BF" stroke-width="0.7" stroke-linejoin="round"/></svg>
<svg style="left:762.4px;top:452.26px;" width="6" height="6.8" viewBox="0 0 6 6.8"><path d="M0.2 1 H5.8 V1.8 H0.2Z M2.1 0.2 H3.9 V1 H2.1Z M0.8 2.2 H5.2 L4.8 6.6 H1.2Z" fill="#BFC2C8"/></svg>
<svg style="left:225.7px;top:469.5px;" width="7" height="7.2" viewBox="0 0 7 7.2"><g fill="none" stroke="#1D7AFC" stroke-width="0.85" stroke-linecap="round" stroke-linejoin="round"><path d="M3 1.7 H1.7 C1 1.7 0.5 2.2 0.5 2.9 V5.5 C0.5 6.2 1 6.7 1.7 6.7 H4.4 C5.1 6.7 5.6 6.2 5.6 5.5 V4.5"/><path d="M4.4 0.6 H6.5 V2.7 M6.4 0.7 L3.5 3.6"/></g></svg>
<span style="left:236.10px;top:469px;font-size:7.8px;transform:scaleX(1.119);font-weight:700;color:#2A7BE4;">e6280aa6</span>
<span style="left:321.10px;top:469px;font-size:7.3px;transform:scaleX(1.1019);color:#15181D;-webkit-text-stroke:0.12px #15181D;">mastercard</span>
<svg style="left:529px;top:470px;" width="30" height="10"><rect x="0.50" y="0.50" width="29.40" height="9.20" rx="4.6" fill="#FFF0B3"/></svg>
<span style="left:533.20px;top:469px;font-size:6.7px;color:#FF5B36;letter-spacing:-0.006px;">manual</span>
<svg style="left:608px;top:471px;" width="5" height="6"><rect x="0.10" y="0.90" width="4.20" height="4.20" rx="2.1" fill="#FF5630"/></svg>
<svg style="left:673px;top:470px;" width="29" height="10"><rect x="0.50" y="0.60" width="27.80" height="9.10" rx="4.5" fill="#EDEDEE"/></svg>
<span style="left:676.90px;top:469px;font-size:6.7px;transform:scaleX(1.0463);color:#1B1B1B;">normal</span>
<svg style="left:739.2px;top:470.3px;" width="8.4" height="6.4" viewBox="0 0 8.4 6.4"><path d="M0.2 3.2 C1.4 1.1 2.8 0.2 4.2 0.2 C5.6 0.2 7 1.1 8.2 3.2 C7 5.3 5.6 6.2 4.2 6.2 C2.8 6.2 1.4 5.3 0.2 3.2Z" fill="#0B0B0B"/><circle cx="4.2" cy="3.2" r="1.7" fill="#fff"/><circle cx="4.2" cy="3.2" r="1" fill="#0B0B0B"/></svg>
<svg style="left:753.3px;top:470.3px;" width="6" height="6.2" viewBox="0 0 6 6.2"><path d="M0.5 5.8 L0.9 4.2 L4.3 0.7 C4.6 0.4 5.1 0.4 5.4 0.7 C5.7 1 5.7 1.4 5.4 1.7 L2 5.3 Z" fill="none" stroke="#B4B8BF" stroke-width="0.7" stroke-linejoin="round"/></svg>
<svg style="left:762.4px;top:469.9px;" width="6" height="6.8" viewBox="0 0 6 6.8"><path d="M0.2 1 H5.8 V1.8 H0.2Z M2.1 0.2 H3.9 V1 H2.1Z M0.8 2.2 H5.2 L4.8 6.6 H1.2Z" fill="#BFC2C8"/></svg>
<svg style="left:225.7px;top:487.14px;" width="7" height="7.2" viewBox="0 0 7 7.2"><g fill="none" stroke="#1D7AFC" stroke-width="0.85" stroke-linecap="round" stroke-linejoin="round"><path d="M3 1.7 H1.7 C1 1.7 0.5 2.2 0.5 2.9 V5.5 C0.5 6.2 1 6.7 1.7 6.7 H4.4 C5.1 6.7 5.6 6.2 5.6 5.5 V4.5"/><path d="M4.4 0.6 H6.5 V2.7 M6.4 0.7 L3.5 3.6"/></g></svg>
<span style="left:236.10px;top:487px;font-size:7.8px;transform:scaleX(1.0976);font-weight:700;color:#2A7BE4;">2ffbd8bd</span>
<span style="left:321.10px;top:487px;font-size:7.3px;transform:scaleX(1.1046);color:#15181D;-webkit-text-stroke:0.12px #15181D;">mastercard 3d</span>
<svg style="left:529px;top:488px;" width="30" height="10"><rect x="0.50" y="0.14" width="29.40" height="9.20" rx="4.6" fill="#FFF0B3"/></svg>
<span style="left:533.20px;top:487px;font-size:6.7px;color:#FF5B36;letter-spacing:-0.006px;">manual</span>
<svg style="left:608px;top:489px;" width="5" height="5"><rect x="0.10" y="0.54" width="4.20" height="4.20" rx="2.1" fill="#36D399"/></svg>
<svg style="left:673px;top:488px;" width="29" height="10"><rect x="0.50" y="0.24" width="27.80" height="9.10" rx="4.5" fill="#EDEDEE"/></svg>
<span style="left:676.90px;top:487px;font-size:6.7px;transform:scaleX(1.0463);color:#1B1B1B;">normal</span>
<svg style="left:739.2px;top:487.94px;" width="8.4" height="6.4" viewBox="0 0 8.4 6.4"><path d="M0.2 3.2 C1.4 1.1 2.8 0.2 4.2 0.2 C5.6 0.2 7 1.1 8.2 3.2 C7 5.3 5.6 6.2 4.2 6.2 C2.8 6.2 1.4 5.3 0.2 3.2Z" fill="#0B0B0B"/><circle cx="4.2" cy="3.2" r="1.7" fill="#fff"/><circle cx="4.2" cy="3.2" r="1" fill="#0B0B0B"/></svg>
<svg style="left:753.3px;top:487.94px;" width="6" height="6.2" viewBox="0 0 6 6.2"><path d="M0.5 5.8 L0.9 4.2 L4.3 0.7 C4.6 0.4 5.1 0.4 5.4 0.7 C5.7 1 5.7 1.4 5.4 1.7 L2 5.3 Z" fill="none" stroke="#B4B8BF" stroke-width="0.7" stroke-linejoin="round"/></svg>
<svg style="left:762.4px;top:487.54px;" width="6" height="6.8" viewBox="0 0 6 6.8"><path d="M0.2 1 H5.8 V1.8 H0.2Z M2.1 0.2 H3.9 V1 H2.1Z M0.8 2.2 H5.2 L4.8 6.6 H1.2Z" fill="#BFC2C8"/></svg>
<svg style="left:225.7px;top:504.78px;" width="7" height="7.2" viewBox="0 0 7 7.2"><g fill="none" stroke="#1D7AFC" stroke-width="0.85" stroke-linecap="round" stroke-linejoin="round"><path d="M3 1.7 H1.7 C1 1.7 0.5 2.2 0.5 2.9 V5.5 C0.5 6.2 1 6.7 1.7 6.7 H4.4 C5.1 6.7 5.6 6.2 5.6 5.5 V4.5"/><path d="M4.4 0.6 H6.5 V2.7 M6.4 0.7 L3.5 3.6"/></g></svg>
<span style="left:236.10px;top:504px;font-size:7.8px;transform:scaleX(1.1301);font-weight:700;color:#2A7BE4;">ab8a8f06</span>
<span style="left:321.10px;top:504px;font-size:7.3px;transform:scaleX(1.0761);color:#15181D;-webkit-text-stroke:0.12px #15181D;">test 1</span>
<svg style="left:529px;top:505px;" width="30" height="10"><rect x="0.50" y="0.78" width="29.40" height="9.20" rx="4.6" fill="#FFF0B3"/></svg>
<span style="left:533.20px;top:504px;font-size:6.7px;color:#FF5B36;letter-spacing:-0.006px;">manual</span>
<svg style="left:608px;top:507px;" width="5" height="5"><rect x="0.10" y="0.18" width="4.20" height="4.20" rx="2.1" fill="#36D399"/></svg>
<svg style="left:614px;top:507px;" width="5" height="5"><rect x="0.66" y="0.18" width="4.20" height="4.20" rx="2.1" fill="#36D399"/></svg>
<svg style="left:673px;top:505px;" width="29" height="10"><rect x="0.50" y="0.88" width="27.80" height="9.10" rx="4.5" fill="#EDEDEE"/></svg>
<span style="left:676.90px;top:504px;font-size:6.7px;transform:scaleX(1.0463);color:#1B1B1B;">normal</span>
<svg style="left:739.2px;top:505.58px;" width="8.4" height="6.4" viewBox="0 0 8.4 6.4"><path d="M0.2 3.2 C1.4 1.1 2.8 0.2 4.2 0.2 C5.6 0.2 7 1.1 8.2 3.2 C7 5.3 5.6 6.2 4.2 6.2 C2.8 6.2 1.4 5.3 0.2 3.2Z" fill="#0B0B0B"/><circle cx="4.2" cy="3.2" r="1.7" fill="#fff"/><circle cx="4.2" cy="3.2" r="1" fill="#0B0B0B"/></svg>
<svg style="left:753.3px;top:505.58px;" width="6" height="6.2" viewBox="0 0 6 6.2"><path d="M0.5 5.8 L0.9 4.2 L4.3 0.7 C4.6 0.4 5.1 0.4 5.4 0.7 C5.7 1 5.7 1.4 5.4 1.7 L2 5.3 Z" fill="none" stroke="#B4B8BF" stroke-width="0.7" stroke-linejoin="round"/></svg>
<svg style="left:762.4px;top:505.18px;" width="6" height="6.8" viewBox="0 0 6 6.8"><path d="M0.2 1 H5.8 V1.8 H0.2Z M2.1 0.2 H3.9 V1 H2.1Z M0.8 2.2 H5.2 L4.8 6.6 H1.2Z" fill="#BFC2C8"/></svg>
<svg style="left:225.7px;top:522.42px;" width="7" height="7.2" viewBox="0 0 7 7.2"><g fill="none" stroke="#1D7AFC" stroke-width="0.85" stroke-linecap="round" stroke-linejoin="round"><path d="M3 1.7 H1.7 C1 1.7 0.5 2.2 0.5 2.9 V5.5 C0.5 6.2 1 6.7 1.7 6.7 H4.4 C5.1 6.7 5.6 6.2 5.6 5.5 V4.5"/><path d="M4.4 0.6 H6.5 V2.7 M6.4 0.7 L3.5 3.6"/></g></svg>
<span style="left:236.10px;top:522px;font-size:7.8px;transform:scaleX(1.08);font-weight:700;color:#2A7BE4;">aeb703e6</span>
<span style="left:321.10px;top:522px;font-size:7.3px;transform:scaleX(1.1153);color:#15181D;-webkit-text-stroke:0.12px #15181D;">test 2</span>
<svg style="left:529px;top:523px;" width="30" height="10"><rect x="0.50" y="0.42" width="29.40" height="9.20" rx="4.6" fill="#FFF0B3"/></svg>
<span style="left:533.20px;top:522px;font-size:6.7px;color:#FF5B36;letter-spacing:-0.006px;">manual</span>
<svg style="left:673px;top:523px;" width="29" height="10"><rect x="0.50" y="0.52" width="27.80" height="9.10" rx="4.5" fill="#EDEDEE"/></svg>
<span style="left:676.90px;top:522px;font-size:6.7px;transform:scaleX(1.0463);color:#1B1B1B;">normal</span>
<svg style="left:739.2px;top:523.22px;" width="8.4" height="6.4" viewBox="0 0 8.4 6.4"><path d="M0.2 3.2 C1.4 1.1 2.8 0.2 4.2 0.2 C5.6 0.2 7 1.1 8.2 3.2 C7 5.3 5.6 6.2 4.2 6.2 C2.8 6.2 1.4 5.3 0.2 3.2Z" fill="#0B0B0B"/><circle cx="4.2" cy="3.2" r="1.7" fill="#fff"/><circle cx="4.2" cy="3.2" r="1" fill="#0B0B0B"/></svg>
<svg style="left:753.3px;top:523.22px;" width="6" height="6.2" viewBox="0 0 6 6.2"><path d="M0.5 5.8 L0.9 4.2 L4.3 0.7 C4.6 0.4 5.1 0.4 5.4 0.7 C5.7 1 5.7 1.4 5.4 1.7 L2 5.3 Z" fill="none" stroke="#B4B8BF" stroke-width="0.7" stroke-linejoin="round"/></svg>
<svg style="left:762.4px;top:522.82px;" width="6" height="6.8" viewBox="0 0 6 6.8"><path d="M0.2 1 H5.8 V1.8 H0.2Z M2.1 0.2 H3.9 V1 H2.1Z M0.8 2.2 H5.2 L4.8 6.6 H1.2Z" fill="#BFC2C8"/></svg>
<svg style="left:225.7px;top:540.06px;" width="7" height="7.2" viewBox="0 0 7 7.2"><g fill="none" stroke="#1D7AFC" stroke-width="0.85" stroke-linecap="round" stroke-linejoin="round"><path d="M3 1.7 H1.7 C1 1.7 0.5 2.2 0.5 2.9 V5.5 C0.5 6.2 1 6.7 1.7 6.7 H4.4 C5.1 6.7 5.6 6.2 5.6 5.5 V4.5"/><path d="M4.4 0.6 H6.5 V2.7 M6.4 0.7 L3.5 3.6"/></g></svg>
<span style="left:236.10px;top:540px;font-size:7.8px;transform:scaleX(1.1329);font-weight:700;color:#2A7BE4;">c35ef653</span>
<span style="left:321.10px;top:540px;font-size:7.3px;transform:scaleX(1.0952);color:#15181D;-webkit-text-stroke:0.12px #15181D;">Todos survive a page refresh</span>
<svg style="left:529px;top:541px;" width="42" height="10"><rect x="0.50" y="0.06" width="40.70" height="9.20" rx="4.6" fill="#B3D4FF"/></svg>
<span style="left:533.20px;top:540px;font-size:6.7px;transform:scaleX(1.0725);color:#0C66E4;">automated</span>
<svg style="left:608px;top:542px;" width="5" height="5"><rect x="0.10" y="0.46" width="4.20" height="4.20" rx="2.1" fill="#36D399"/></svg>
<svg style="left:614px;top:542px;" width="5" height="5"><rect x="0.66" y="0.46" width="4.20" height="4.20" rx="2.1" fill="#36D399"/></svg>
<svg style="left:621px;top:542px;" width="5" height="5"><rect x="0.22" y="0.46" width="4.20" height="4.20" rx="2.1" fill="#FFB302"/></svg>
<svg style="left:627px;top:542px;" width="5" height="5"><rect x="0.78" y="0.46" width="4.20" height="4.20" rx="2.1" fill="#FFB302"/></svg>
<svg style="left:634px;top:542px;" width="5" height="5"><rect x="0.34" y="0.46" width="4.20" height="4.20" rx="2.1" fill="#36D399"/></svg>
<svg style="left:673px;top:541px;" width="23" height="10"><rect x="0.50" y="0.16" width="21.60" height="9.10" rx="4.5" fill="#C7D2E1"/></svg>
<span style="left:676.90px;top:540px;font-size:6.7px;transform:scaleX(1.0544);color:#1B1B1B;">none</span>
<svg style="left:739.2px;top:540.86px;" width="8.4" height="6.4" viewBox="0 0 8.4 6.4"><path d="M0.2 3.2 C1.4 1.1 2.8 0.2 4.2 0.2 C5.6 0.2 7 1.1 8.2 3.2 C7 5.3 5.6 6.2 4.2 6.2 C2.8 6.2 1.4 5.3 0.2 3.2Z" fill="#0B0B0B"/><circle cx="4.2" cy="3.2" r="1.7" fill="#fff"/><circle cx="4.2" cy="3.2" r="1" fill="#0B0B0B"/></svg>
<svg style="left:753.3px;top:540.86px;" width="6" height="6.2" viewBox="0 0 6 6.2"><path d="M0.5 5.8 L0.9 4.2 L4.3 0.7 C4.6 0.4 5.1 0.4 5.4 0.7 C5.7 1 5.7 1.4 5.4 1.7 L2 5.3 Z" fill="none" stroke="#B4B8BF" stroke-width="0.7" stroke-linejoin="round"/></svg>
<svg style="left:762.4px;top:540.46px;" width="6" height="6.8" viewBox="0 0 6 6.8"><path d="M0.2 1 H5.8 V1.8 H0.2Z M2.1 0.2 H3.9 V1 H2.1Z M0.8 2.2 H5.2 L4.8 6.6 H1.2Z" fill="#BFC2C8"/></svg>
<svg style="left:224px;top:553px;" width="588" height="3"><rect x="0.50" y="0.20" width="587.50" height="2.20" rx="0" fill="#DFE1E6"/></svg>
<svg style="left:225.9px;top:566.8px;" width="17.5" height="17.5" viewBox="0 0 17.5 17.5"><circle cx="8.75" cy="8.75" r="8.75" fill="#F9CDCD"/><path d="M2.6 12.2 C4 15.2 13.5 15.2 14.9 12.2 C15.2 13.6 13 16.2 8.75 16.2 C4.5 16.2 2.3 13.6 2.6 12.2Z" fill="#3B2A1E"/><circle cx="8.75" cy="8.6" r="5.6" fill="#FFC83D"/><path d="M4.6 7 C4.6 5.6 6.2 5.6 6.5 6.5 C6.8 5.6 8.4 5.6 8.4 7 C8.4 8.2 6.5 9.2 6.5 9.2 C6.5 9.2 4.6 8.2 4.6 7Z" fill="#F03A17"/><path d="M9.1 7 C9.1 5.6 10.7 5.6 11 6.5 C11.3 5.6 12.9 5.6 12.9 7 C12.9 8.2 11 9.2 11 9.2 C11 9.2 9.1 8.2 9.1 7Z" fill="#F03A17"/><path d="M6 10.4 C7 12.6 10.5 12.6 11.5 10.4Z" fill="#7A3B10"/></svg>
<svg style="left:251px;top:564px;" width="562" height="51"><rect x="0.70" y="0.90" width="560.20" height="49.20" rx="2" fill="#fff" stroke="#BCC2CC" stroke-width="1"/></svg>
<span style="left:263.20px;top:572px;font-size:7.5px;transform:scaleX(1.0586);color:#7A869A;-webkit-text-stroke:0.15px #7A869A;">Add a comment...</span>
<svg style="left:261px;top:591px;" width="69" height="13"><rect x="0.30" y="0.10" width="68.30" height="12.60" rx="6.3" fill="#F1F2F4"/></svg>
<svg style="left:267.5px;top:592.8px;" width="9" height="9.2" viewBox="0 0 9 9.2"><path d="M0.6 8.6 L2.6 2.6 L6.6 6.6Z" fill="#F4B740"/><path d="M1.6 6 L3.6 7.6 M2.2 4.2 L5 6.6" stroke="#E2574C" stroke-width="0.7"/><circle cx="6.6" cy="1.4" r="0.7" fill="#E2574C"/><circle cx="8.2" cy="4.6" r="0.6" fill="#8B5CF6"/><path d="M4.4 2.8 C4.6 1.6 5.4 1 5.2 0.2" stroke="#36B37E" stroke-width="0.6" fill="none"/><path d="M6.4 4.4 C7.4 3.8 8 3 8.8 3" stroke="#F4B740" stroke-width="0.6" fill="none"/></svg>
<span style="left:279.10px;top:592px;font-size:7.4px;font-weight:700;color:#253858;letter-spacing:0.025px;">Looks good!</span>
<svg style="left:334px;top:591px;" width="66" height="13"><rect x="0.40" y="0.10" width="64.90" height="12.60" rx="6.3" fill="#F1F2F4"/></svg>
<svg style="left:340.5px;top:592.8px;" width="9" height="9.2" viewBox="0 0 9 9.2"><path d="M2 4.4 L4.4 1 C4.9 0.4 5.7 1 5.3 1.6 L6 0.9 C6.6 0.4 7.3 1.1 6.8 1.7 L7.4 1.4 C8 1.1 8.5 1.8 8 2.4 L8.2 2.6 C8.8 3.4 8.6 5.6 7.2 7.2 C5.8 8.8 3.4 9 2.2 7.6 C1.2 6.4 1.4 5.2 2 4.4Z" fill="#FFC83D"/><path d="M0.6 2.6 C0.8 1.6 1.4 1 2.2 0.8 M0.2 3.8 C0.2 3.4 0.3 3.1 0.4 2.9" stroke="#A7A7A7" stroke-width="0.5" fill="none"/></svg>
<span style="left:352.10px;top:592px;font-size:7.4px;font-weight:700;color:#253858;letter-spacing:0.128px;">Need help?</span>
<svg style="left:404px;top:591px;" width="86" height="13"><rect x="0.00" y="0.10" width="85.20" height="12.60" rx="6.3" fill="#F1F2F4"/></svg>
<svg style="left:410.5px;top:592.8px;" width="9" height="9.2" viewBox="0 0 9 9.2"><circle cx="4.3" cy="4.5" r="4" fill="#E5352B"/><rect x="1.5" y="3.6" width="5.6" height="1.8" rx="0.4" fill="#fff"/></svg>
<span style="left:422.10px;top:592px;font-size:7.4px;font-weight:700;color:#253858;letter-spacing:0.053px;">This is blocked...</span>
<svg style="left:493px;top:591px;" width="89" height="13"><rect x="0.60" y="0.10" width="88.40" height="12.60" rx="6.3" fill="#F1F2F4"/></svg>
<svg style="left:499.8px;top:592.8px;" width="9" height="9.2" viewBox="0 0 9 9.2"><circle cx="3.4" cy="3.4" r="2.7" fill="#DCE9F5" stroke="#6B7280" stroke-width="0.8"/><path d="M5.5 5.5 L8.4 8.4" stroke="#3F3F46" stroke-width="1.4" stroke-linecap="round"/></svg>
<span style="left:511.40px;top:592px;font-size:7.4px;font-weight:700;color:#253858;letter-spacing:0.101px;">Can you clarify...?</span>
<svg style="left:586px;top:591px;" width="80" height="13"><rect x="0.90" y="0.10" width="78.90" height="12.60" rx="6.3" fill="#F1F2F4"/></svg>
<svg style="left:593.1px;top:592.8px;" width="9" height="9.2" viewBox="0 0 9 9.2"><rect x="0.2" y="0.4" width="8.4" height="8.4" rx="1.2" fill="#22C03C"/><path d="M2.2 4.8 L3.8 6.4 L6.8 2.6" fill="none" stroke="#fff" stroke-width="1.3" stroke-linecap="round" stroke-linejoin="round"/></svg>
<span style="left:604.70px;top:592px;font-size:7.4px;font-weight:700;color:#253858;letter-spacing:0.063px;">This is on track</span>
<span style="left:251.50px;top:616px;font-size:6.2px;transform:scaleX(1.1353);font-weight:700;color:#44546F;">Pro tip:</span>
<span style="left:278.20px;top:616px;font-size:6.2px;transform:scaleX(1.0955);color:#626F86;-webkit-text-stroke:0.12px #626F86;">press</span>
<svg style="left:296px;top:619px;" width="11" height="9"><rect x="0.40" y="0.40" width="9.70" height="7.80" rx="1" fill="#F1F2F4"/></svg>
<span style="left:298.90px;top:617px;font-size:5.8px;transform:scaleX(1.1508);font-weight:700;color:#44546F;">M</span>
<span style="left:309.10px;top:616px;font-size:6.2px;transform:scaleX(1.1472);color:#626F86;-webkit-text-stroke:0.12px #626F86;">to comment</span>
<svg style="left:1047.8px;top:48.6px;" width="11.8" height="8.4" viewBox="0 0 11.8 8.4"><path d="M0.6 4.2 C2 1.6 3.9 0.6 5.9 0.6 C7.9 0.6 9.8 1.6 11.2 4.2 C9.8 6.8 7.9 7.8 5.9 7.8 C3.9 7.8 2 6.8 0.6 4.2Z" fill="none" stroke="#172B4D" stroke-width="1.05"/><circle cx="5.9" cy="4.2" r="2.2" fill="none" stroke="#172B4D" stroke-width="0.9"/><circle cx="5.9" cy="4.2" r="0.7" fill="#172B4D"/></svg>
<span style="left:1062.50px;top:48px;font-size:8px;transform:scaleX(0.6602);-webkit-text-stroke:0.3px #172B4D;">1</span>
<svg style="left:1076.8px;top:47.8px;" width="9.8" height="9.6" viewBox="0 0 9.8 9.6"><g fill="none" stroke="#172B4D" stroke-width="1" stroke-linejoin="round"><path d="M0.6 4.4 H2.6 V8.8 H0.6Z"/><path d="M2.6 4.4 L4.4 1 C4.6 0.4 5.8 0.6 5.8 1.6 L5.4 3.6 H8.2 C8.9 3.6 9.3 4.2 9.1 4.8 L8.1 8.2 C8 8.6 7.7 8.8 7.3 8.8 H2.6"/></g></svg>
<svg style="left:1095.5px;top:47.8px;" width="10.2" height="9.4" viewBox="0 0 10.2 9.4"><g fill="none" stroke="#172B4D" stroke-width="0.95"><circle cx="8.2" cy="1.9" r="1.3"/><circle cx="8.2" cy="7.5" r="1.3"/><circle cx="1.9" cy="4.7" r="1.3"/><path d="M3.1 4.1 L7 2.4 M3.1 5.3 L7 7"/></g></svg>
<svg style="left:1113.3px;top:51.3px;" width="10" height="2.6" viewBox="0 0 10 2.6"><g fill="#172B4D"><circle cx="1.3" cy="1.3" r="1.05"/><circle cx="5" cy="1.3" r="1.05"/><circle cx="8.7" cy="1.3" r="1.05"/></g></svg>
<svg style="left:832px;top:69px;" width="48" height="18"><rect x="0.00" y="0.20" width="47.70" height="17.70" rx="2" fill="#F1F2F4"/></svg>
<span style="left:838.80px;top:73px;font-size:7.6px;color:#253858;letter-spacing:0.137px;-webkit-text-stroke:0.4px #253858;">To Do</span>
<svg style="left:866.2px;top:76.05px;" width="5.6" height="3.9" viewBox="0 0 5.6 3.9"><path d="M1 1 L2.8 2.9 L4.6 1" fill="none" stroke="#253858" stroke-width="1.1" stroke-linecap="round" stroke-linejoin="round"/></svg>
<svg style="left:883px;top:68px;" width="70" height="20"><rect x="0.65" y="0.65" width="68.40" height="18.40" rx="2.35" fill="#fff" stroke="#8B7BE3" stroke-width="1.3"/></svg>
<svg style="left:891.7px;top:73.2px;" width="6.5" height="9.4" viewBox="0 0 6.5 9.4"><path d="M4.6 0.2 L0.5 5.4 H2.9 L1.9 9.2 L6.1 3.9 H3.7 Z" fill="#172B4D" stroke="#172B4D" stroke-width="0.4" stroke-linejoin="round"/></svg>
<span style="left:903.60px;top:73px;font-size:7.6px;transform:scaleX(1.1133);color:#253858;-webkit-text-stroke:0.4px #253858;">Actions</span>
<svg style="left:937.7px;top:76.05px;" width="5.6" height="3.9" viewBox="0 0 5.6 3.9"><path d="M1 1 L2.8 2.9 L4.6 1" fill="none" stroke="#253858" stroke-width="1.1" stroke-linecap="round" stroke-linejoin="round"/></svg>
<svg style="left:832px;top:93px;" width="295" height="162"><rect x="0.50" y="0.90" width="293.80" height="160.60" rx="2" fill="#fff" stroke="#E6E8EC" stroke-width="1"/></svg>
<svg style="left:833px;top:118px;" width="293" height="2"><rect x="0.00" y="0.80" width="292.80" height="1.00" rx="0" fill="#E9EBEE"/></svg>
<span style="left:838.80px;top:101px;font-size:7.4px;transform:scaleX(1.0986);">Details</span>
<svg style="left:1110.5px;top:104.55px;" width="5.2" height="3.7" viewBox="0 0 5.2 3.7"><path d="M1 2.7 L2.6 1 L4.2 2.7" fill="none" stroke="#44546F" stroke-width="1.05" stroke-linecap="round" stroke-linejoin="round"/></svg>
<span style="left:838.80px;top:129px;font-size:7.4px;transform:scaleX(1.0794);color:#44546F;-webkit-text-stroke:0.12px #44546F;">Assignee</span>
<svg style="left:933.9px;top:126.5px;" width="13.3" height="13.3" viewBox="0 0 13.3 13.3"><circle cx="6.65" cy="6.65" r="6.65" fill="#44546F"/><circle cx="6.65" cy="4.9" r="2.4" fill="#fff"/><path d="M2.2 10.2 C2.2 8.4 3.6 7.8 4.6 7.8 H8.7 C9.7 7.8 11.1 8.4 11.1 10.2 C10 11.6 8.4 12.3 6.65 12.3 C4.9 12.3 3.3 11.6 2.2 10.2Z" fill="#fff"/></svg>
<span style="left:952.20px;top:128px;font-size:7.4px;transform:scaleX(1.0839);">Unassigned</span>
<span style="left:932.90px;top:143px;font-size:6.3px;transform:scaleX(1.1012);color:#0C66E4;">Assign to me</span>
<span style="left:838.80px;top:164px;font-size:7.4px;transform:scaleX(1.0891);color:#44546F;-webkit-text-stroke:0.12px #44546F;">Labels</span>
<span style="left:932.90px;top:164px;font-size:7.4px;transform:scaleX(1.0481);color:#626F86;">None</span>
<span style="left:838.80px;top:188px;font-size:7.4px;transform:scaleX(1.0982);color:#44546F;-webkit-text-stroke:0.12px #44546F;">Development</span>
<svg style="left:931.3px;top:188.4px;" width="7.4" height="10" viewBox="0 0 7.4 10"><g fill="none" stroke="#0C66E4" stroke-width="0.95"><circle cx="2" cy="1.7" r="1.2"/><circle cx="2" cy="8.3" r="1.2"/><circle cx="5.8" cy="3.6" r="1.2"/><path d="M2 2.9 V7.1 M5.8 4.8 C5.8 6.2 4.4 6.6 2.2 7"/></g></svg>
<span style="left:943.80px;top:187px;font-size:7.4px;transform:scaleX(1.1127);color:#0C66E4;-webkit-text-stroke:0.2px #0C66E4;">Create branch</span>
<svg style="left:1106.4px;top:191.25px;" width="5.2" height="3.7" viewBox="0 0 5.2 3.7"><path d="M1 1 L2.6 2.7 L4.2 1" fill="none" stroke="#0C66E4" stroke-width="1.1" stroke-linecap="round" stroke-linejoin="round"/></svg>
<svg style="left:932.8px;top:205px;" width="5" height="10.8" viewBox="0 0 5 10.8"><g fill="none" stroke="#0C66E4" stroke-width="0.95"><circle cx="2.5" cy="5.4" r="1.7"/><path d="M2.5 0.3 V3.7 M2.5 7.1 V10.5"/></g></svg>
<span style="left:943.80px;top:205px;font-size:7.4px;transform:scaleX(1.1261);color:#0C66E4;-webkit-text-stroke:0.2px #0C66E4;">Create commit</span>
<svg style="left:1106.1px;top:208.65px;" width="5.2" height="3.7" viewBox="0 0 5.2 3.7"><path d="M1 1 L2.6 2.7 L4.2 1" fill="none" stroke="#0C66E4" stroke-width="1.1" stroke-linecap="round" stroke-linejoin="round"/></svg>
<span style="left:838.80px;top:230px;font-size:7.4px;transform:scaleX(1.1132);color:#44546F;-webkit-text-stroke:0.12px #44546F;">Reporter</span>
<svg style="left:932px;top:228px;" width="15" height="14"><rect x="0.80" y="0.00" width="13.60" height="13.60" rx="6.8" fill="#5243AA"/></svg>
<span style="left:935.20px;top:229px;font-size:5px;transform:scaleX(1.1133);font-weight:700;color:#fff;">MP</span>
<span style="left:950.20px;top:230px;font-size:7.4px;transform:scaleX(1.0943);">Mykhailo</span>
<svg style="left:832px;top:260px;" width="295" height="26"><rect x="0.50" y="0.60" width="293.80" height="24.70" rx="2" fill="#fff" stroke="#E6E8EC" stroke-width="1"/></svg>
<span style="left:838.80px;top:267px;font-size:7.4px;transform:scaleX(1.1105);-webkit-text-stroke:0.25px #172B4D;">Automation</span>
<svg style="left:891.2px;top:267.3px;" width="7.8" height="11.6" viewBox="0 0 7.8 11.6"><path d="M2.6 0.6 H7.2 L5.4 4.4 H7.2 L2 11 L3.2 6.4 H0.8 Z" fill="none" stroke="#172B4D" stroke-width="0.95" stroke-linejoin="round"/></svg>
<span style="left:906.50px;top:267px;font-size:6.3px;transform:scaleX(1.0977);color:#626F86;">Rule executions</span>
<svg style="left:1110.5px;top:271.35px;" width="5.2" height="3.7" viewBox="0 0 5.2 3.7"><path d="M1 1 L2.6 2.7 L4.2 1" fill="none" stroke="#44546F" stroke-width="1.05" stroke-linecap="round" stroke-linejoin="round"/></svg>
<span style="left:839.10px;top:294px;font-size:6.4px;transform:scaleX(1.0996);color:#44546F;">Created October 13, 2021 at 4:04 PM</span>
<span style="left:839.10px;top:307px;font-size:6.4px;transform:scaleX(1.1062);color:#44546F;">Updated January 12, 2024 at 6:42 PM</span>
<svg style="left:1071.7px;top:297.7px;" width="8.2" height="8.2" viewBox="1.5 0.5 21 21"><g transform="translate(12 10.5)"><circle r="6.6" fill="none" stroke="#344563" stroke-width="3"/><rect x="-1.7" y="-10.2" width="3.4" height="3.4" rx="0.8" fill="#344563" transform="rotate(0)"/><rect x="-1.7" y="-10.2" width="3.4" height="3.4" rx="0.8" fill="#344563" transform="rotate(45)"/><rect x="-1.7" y="-10.2" width="3.4" height="3.4" rx="0.8" fill="#344563" transform="rotate(90)"/><rect x="-1.7" y="-10.2" width="3.4" height="3.4" rx="0.8" fill="#344563" transform="rotate(135)"/><rect x="-1.7" y="-10.2" width="3.4" height="3.4" rx="0.8" fill="#344563" transform="rotate(180)"/><rect x="-1.7" y="-10.2" width="3.4" height="3.4" rx="0.8" fill="#344563" transform="rotate(225)"/><rect x="-1.7" y="-10.2" width="3.4" height="3.4" rx="0.8" fill="#344563" transform="rotate(270)"/><rect x="-1.7" y="-10.2" width="3.4" height="3.4" rx="0.8" fill="#344563" transform="rotate(315)"/></g></svg>
<span style="left:1084.80px;top:296px;font-size:7.8px;transform:scaleX(1.0539);color:#2C3E5D;-webkit-text-stroke:0.2px #2C3E5D;">Configure</span>
<div style="left:0;top:616px;width:1150px;height:14px;background:linear-gradient(rgba(23,43,77,0),rgba(23,43,77,0.045));"></div>
<svg style="left:0px;top:623px;" width="3" height="7" viewBox="0 0 3 7"><path d="M0 0.5 C0.2 3.5 0.8 5.5 2.2 7 H0Z" fill="#3A3560"/></svg>
</div></body></html>
